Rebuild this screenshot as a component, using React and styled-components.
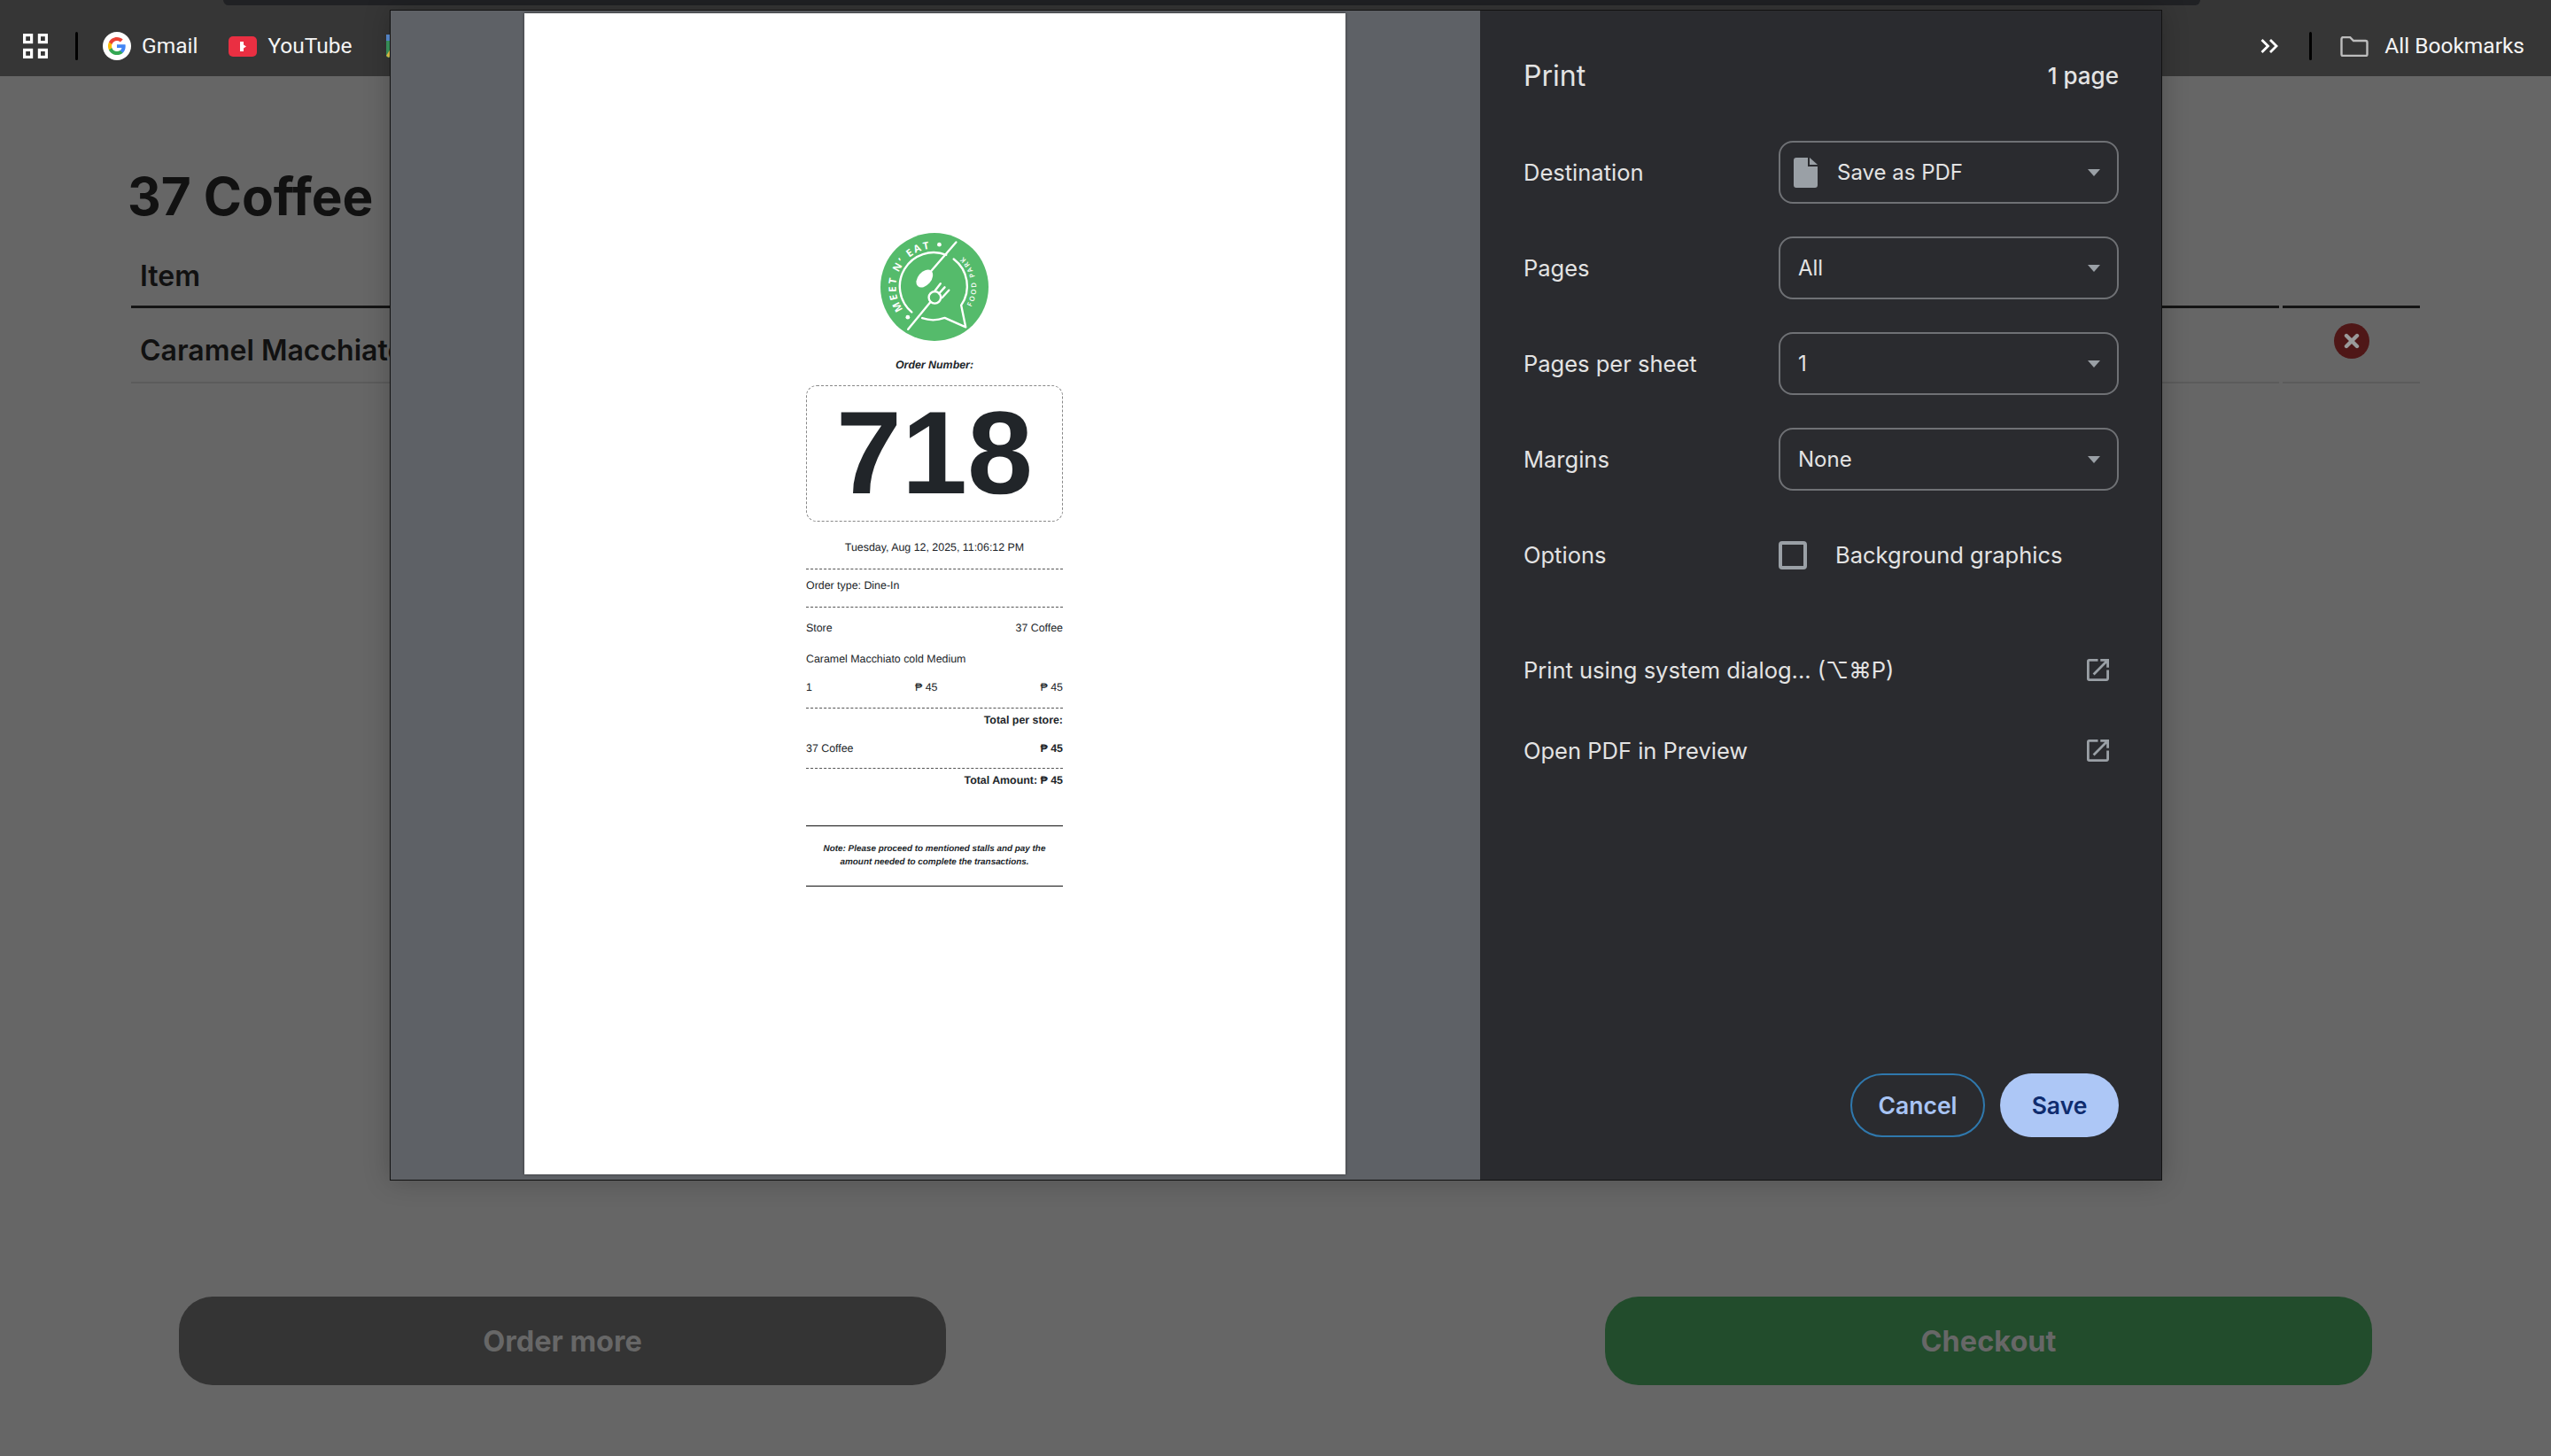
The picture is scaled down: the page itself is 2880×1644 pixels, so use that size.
import React from "react";
import styled, { createGlobalStyle } from "styled-components";

const GlobalStyle = createGlobalStyle`
  html, body {
    margin: 0;
    padding: 0;
    background: #666666;
  }
  body {
    width: 2880px;
    height: 1644px;
    overflow: hidden;
    font-family: Inter, "Liberation Sans", sans-serif;
  }
`;

const Screen = styled.div`
  position: relative;
  width: 2880px;
  height: 1644px;
  display: flex;
  flex-direction: column;
  background: #666666;
  overflow: hidden;
`;

/* browser bookmarks bar */
const BookmarkBar = styled.header`
  position: relative;
  flex: none;
  box-sizing: border-box;
  height: 86px;
  padding: 36px 30px 0 26px;
  display: flex;
  align-items: flex-start;
  background: #363636;
  color: #f4f4f4;
  font-family: Roboto, sans-serif;
  font-size: 24.5px;
`;

const OmniboxEdge = styled.div`
  position: absolute;
  left: 252px;
  right: 396px;
  top: 0;
  height: 6px;
  background: #202124;
  border-radius: 0 0 22px 22px;
`;

const BarGroup = styled.div`
  display: flex;
  align-items: center;
  height: 32px;
  margin-left: ${props => props.$push ? "auto" : "0"};
`;

const BarSeparator = styled.div`
  width: 3px;
  height: 32px;
  margin-left: ${props => props.$ml}px;
  background: #000;
  border-radius: 2px;
`;

const BookmarkLabel = styled.span`
  margin-left: ${props => props.$ml}px;
  line-height: 32px;
`;

const IconSlot = styled.span`
  display: block;
  flex: none;
  line-height: 0;
  margin-left: ${props => props.$ml || 0}px;
`;

/* page behind the dialog */
const Main = styled.main`
  flex: 1;
  display: flex;
  flex-direction: column;
  padding: 101px 148px 80px 148px;
  color: #111;
`;

const Heading = styled.h1`
  margin: 0 0 0 -4px;
  font-size: 58.5px;
  font-weight: 700;
  line-height: 70px;
`;

const CartRow = styled.div`
  display: grid;
  grid-template-columns: 1fr 155px;
  column-gap: 4px;
  margin-top: ${props => props.$mt || 0}px;
  height: ${props => props.$h}px;
`;

const HeadCell = styled.div`
  display: flex;
  align-items: center;
  box-sizing: border-box;
  padding: 2px 0 0 10px;
  border-bottom: 3px solid #141414;
  font-size: 32px;
  font-weight: 600;
`;

const BodyCell = styled.div`
  display: flex;
  align-items: ${props => props.$center ? "flex-start" : "center"};
  justify-content: ${props => props.$center ? "center" : "flex-start"};
  box-sizing: border-box;
  padding: ${props => props.$center ? "17px 0 0" : "12px 0 0 10px"};
  border-bottom: 2px solid #5b5b5b;
  font-size: 32px;
  font-weight: 600;
`;

const RemoveButton = styled.span`
  width: 40px;
  height: 40px;
  border-radius: 50%;
  background: #4f1717;
  display: flex;
  align-items: center;
  justify-content: center;
`;

const Actions = styled.div`
  margin-top: auto;
  display: flex;
  justify-content: space-between;
  padding: 0 54px;
`;

const ActionButton = styled.div`
  width: 866px;
  height: 100px;
  display: flex;
  align-items: center;
  justify-content: center;
  border-radius: 38px;
  background: ${props => props.$bg};
  color: #676767;
  font-size: 32.5px;
  font-weight: 700;
`;

/* print dialog */
const Dialog = styled.section`
  position: absolute;
  left: 440px;
  top: 11px;
  width: 2001px;
  height: 1322px;
  box-sizing: border-box;
  display: flex;
  border: 1px solid #121212;
  box-shadow: 0 0 28px rgba(0, 0, 0, 0.22);
`;

const Preview = styled.div`
  flex: none;
  width: 1230px;
  box-sizing: border-box;
  padding: 3px 0 0 151px;
  background: #5e6166;
`;

const Sheet = styled.div`
  width: 927px;
  height: 1311px;
  box-sizing: border-box;
  padding: 248px 0 0 318px;
  background: #fff;
  box-shadow: 0 0 3px rgba(0, 0, 0, 0.5);
  color: #212529;
  font-family: "Liberation Sans", Arial, sans-serif;
  text-rendering: geometricPrecision;
`;

const Receipt = styled.div`
  width: 290px;
  display: flex;
  flex-direction: column;
`;

const LogoWrap = styled.div`
  align-self: center;
  height: 122px;
  line-height: 0;
`;

const OrderLabel = styled.div`
  margin-top: 17px;
  text-align: center;
  font-size: 12.4px;
  font-weight: 700;
  font-style: italic;
  line-height: 20px;
`;

const NumberBox = styled.div`
  margin-top: 13px;
  height: 154px;
  box-sizing: border-box;
  display: flex;
  align-items: center;
  justify-content: center;
  border: 1px dashed #888;
  border-radius: 12px;
  font-size: 133px;
  font-weight: 700;
  line-height: 1;
`;

const Rule = styled.div`
  margin-top: ${props => props.$mt}px;
  border-top: 1px ${props => props.$solid ? "solid #111" : "dashed #555"};
`;

const Line = styled.div`
  margin-top: ${props => props.$mt}px;
  display: flex;
  justify-content: ${props => props.$align || "flex-start"};
  font-size: 12.4px;
  line-height: 20px;
  font-weight: ${props => props.$bold ? 700 : 400};
`;

const Between = styled(Line)`
  justify-content: space-between;
`;

const Note = styled.p`
  margin: 19px 0 0;
  text-align: center;
  font-size: 9.9px;
  font-weight: 700;
  font-style: italic;
  line-height: 14.5px;
`;

const Panel = styled.aside`
  flex: 1;
  box-sizing: border-box;
  padding: 0 48px 48px 49px;
  display: flex;
  flex-direction: column;
  background: #2a2b2f;
  color: #e3e3e3;
  font-size: 25.5px;
`;

const PanelHead = styled.div`
  height: 147px;
  display: flex;
  align-items: flex-start;
  justify-content: space-between;
`;

const PanelTitle = styled.h2`
  margin: 54px 0 0;
  font-size: 32px;
  font-weight: 400;
  line-height: 40px;
`;

const SheetCount = styled.div`
  margin-top: 54px;
  line-height: 40px;
  font-size: 26px;
  font-weight: 500;
`;

const SettingRow = styled.div`
  display: grid;
  grid-template-columns: 288px 1fr;
  align-items: center;
  height: 71px;
  margin-bottom: 37px;
`;

const SelectBox = styled.div`
  height: 71px;
  box-sizing: border-box;
  padding: 0 20px;
  display: flex;
  align-items: center;
  border: 2px solid #6f7175;
  border-radius: 16px;
  font-size: 24px;
`;

const SelectText = styled.span`
  flex: 1;
  margin-left: ${props => props.$ml || 0}px;
`;

const Caret = styled.span`
  width: 0;
  height: 0;
  margin-right: -1px;
  border-left: 7px solid transparent;
  border-right: 7px solid transparent;
  border-top: 8px solid #9aa0a6;
`;

const CheckRow = styled.div`
  display: flex;
  align-items: center;
  gap: 32px;
`;

const CheckBox = styled.span`
  width: 32px;
  height: 32px;
  box-sizing: border-box;
  border: 4px solid #9aa0a6;
  border-radius: 4px;
`;

const LinkRow = styled.div`
  height: 91px;
  display: flex;
  align-items: center;
  justify-content: space-between;
  padding-right: 11px;
  margin-top: ${props => props.$mt || 0}px;
`;

const Footer = styled.div`
  margin-top: auto;
  display: flex;
  justify-content: flex-end;
  gap: 17px;
`;

const PillButton = styled.div`
  height: 72px;
  width: ${props => props.$w}px;
  box-sizing: border-box;
  display: flex;
  align-items: center;
  justify-content: center;
  border-radius: 36px;
  font-size: 26.5px;
  font-weight: 600;
  border: ${props => props.$primary ? "none" : "2px solid #2f78ad"};
  background: ${props => props.$primary ? "#adc7f6" : "transparent"};
  color: ${props => props.$primary ? "#0f2c6e" : "#a8c4f4"};
`;

const AppsIcon = () => (
  <svg width="28" height="28" viewBox="0 0 28 28" fill="none" stroke="#fff" strokeWidth="3.2">
    <rect x="1.6" y="1.6" width="8" height="8" />
    <rect x="18.4" y="1.6" width="8" height="8" />
    <rect x="1.6" y="18.4" width="8" height="8" />
    <rect x="18.4" y="18.4" width="8" height="8" />
  </svg>
);

const GoogleIcon = () => (
  <svg width="32" height="32" viewBox="0 0 32 32">
    <circle cx="16" cy="16" r="16" fill="#fff" />
    <g transform="translate(5 5) scale(0.4583)">
      <path fill="#4285F4" d="M45.12 24.5c0-1.56-.14-3.06-.4-4.5H24v8.51h11.84c-.51 2.75-2.06 5.08-4.39 6.64v5.52h7.11c4.16-3.83 6.56-9.47 6.56-16.17z" />
      <path fill="#34A853" d="M24 46c5.94 0 10.92-1.97 14.56-5.33l-7.11-5.52c-1.97 1.32-4.49 2.1-7.45 2.1-5.73 0-10.58-3.87-12.31-9.07H4.34v5.7C7.96 41.07 15.4 46 24 46z" />
      <path fill="#FBBC05" d="M11.69 28.18c-.44-1.32-.69-2.73-.69-4.18s.25-2.86.69-4.18v-5.7H4.34C2.85 17.09 2 20.45 2 24s.85 6.91 2.34 9.88l7.35-5.7z" />
      <path fill="#EA4335" d="M24 10.75c3.23 0 6.13 1.11 8.41 3.29l6.31-6.31C34.91 4.18 29.93 2 24 2 15.4 2 7.96 6.93 4.34 14.12l7.35 5.7c1.73-5.2 6.58-9.07 12.31-9.07z" />
    </g>
  </svg>
);

const YouTubeIcon = () => (
  <svg width="32" height="23" viewBox="0 0 32 23">
    <rect width="32" height="23" rx="5" fill="#ea2f42" />
    <path fill="#fff" d="M13 6h4v3.5l3 2-3 2V17h-4z" />
  </svg>
);

const MapsIcon = () => (
  <svg width="26" height="26" viewBox="0 0 26 26">
    <rect width="26" height="26" rx="3" fill="#3c9a5f" />
    <path d="M0 24 L10 8 L13 10 L3 26 Z" fill="#e8c64a" />
    <rect x="0" y="0" width="7" height="7" fill="#5b8fd6" />
  </svg>
);

const ChevronsIcon = () => (
  <svg width="20" height="16" viewBox="0 0 20 16" fill="none" stroke="#fff" strokeWidth="2.8">
    <polyline points="1.5,1 8.5,8 1.5,15" />
    <polyline points="11,1 18,8 11,15" />
  </svg>
);

const FolderIcon = () => (
  <svg width="32" height="23" viewBox="0 0 32 23" fill="none" stroke="#bdbdbd" strokeWidth="2.4">
    <path d="M1.5 3a2 2 0 0 1 2-2H11l4 4h13.5a2 2 0 0 1 2 2v13.5a1.5 1.5 0 0 1-1.5 1.5H3a1.5 1.5 0 0 1-1.5-1.5z" />
  </svg>
);

const FileIcon = () => (
  <svg width="27" height="34" viewBox="0 0 27 34">
    <path fill="#9aa0a6" d="M3 0h13v10h11v21a3 3 0 0 1-3 3H3a3 3 0 0 1-3-3V3a3 3 0 0 1 3-3zM18 0l9 8h-9z" />
  </svg>
);

const ExternalIcon = () => (
  <svg width="25" height="25" viewBox="3 3 18 18">
    <path fill="#9aa0a6" d="M19 19H5V5h7V3H5a2 2 0 0 0-2 2v14a2 2 0 0 0 2 2h14c1.1 0 2-.9 2-2v-7h-2v7zM14 3v2h3.59l-9.83 9.83 1.41 1.41L19 6.41V10h2V3h-7z" />
  </svg>
);

const CrossIcon = () => (
  <svg width="18" height="18" viewBox="0 0 18 18" stroke="#9a9a9a" strokeWidth="4.4" strokeLinecap="round">
    <line x1="3" y1="3" x2="15" y2="15" />
    <line x1="15" y1="3" x2="3" y2="15" />
  </svg>
);

const ParkLogo = () => (
  <svg width="122" height="122" viewBox="36 31 360 360">
    <defs>
      <path id="logo-top" d="M112 286 A128 128 0 0 1 240 85" />
      <path id="logo-side" d="M338 278 A139 139 0 0 0 280 88" />
    </defs>
    <circle cx="216" cy="211" r="180" fill="#55bb6b" />
    <g fill="none" stroke="#fff" strokeWidth="7" strokeLinecap="round" strokeLinejoin="round">
      <path d="M140 295 A113 113 0 0 1 255 104" />
      <path d="M280 118 A113 113 0 0 1 305 272 L320 345 L250 314 A113 113 0 0 1 175 315" />
      <line x1="288" y1="62" x2="205" y2="158" />
      <line x1="128" y1="352" x2="202" y2="262" />
      <circle cx="217" cy="246" r="20" />
      <path d="M216 226 L236 200 M231 233 L250 212 M241 247 L264 222" />
    </g>
    <ellipse cx="183" cy="183" rx="22" ry="34" fill="#fff" transform="rotate(40 183 183)" />
    <circle cx="232" cy="70" r="7" fill="#fff" />
    <circle cx="127" cy="312" r="7" fill="#fff" />
    <text fill="#fff" fontFamily="'Open Sans', sans-serif" fontWeight="700" fontSize="34" letterSpacing="6">
      <textPath href="#logo-top">MEET N’ EAT</textPath>
    </text>
    <text fill="#fff" fontFamily="'Open Sans', sans-serif" fontWeight="600" fontSize="23" letterSpacing="6.5">
      <textPath href="#logo-side">FOOD PARK</textPath>
    </text>
  </svg>
);

const SELECTS = [
  { label: "Pages", value: "All" },
  { label: "Pages per sheet", value: "1" },
  { label: "Margins", value: "None" },
];

export default function App() {
  return (
    <Screen>
      <GlobalStyle />
      <BookmarkBar>
        <OmniboxEdge />
        <BarGroup>
          <IconSlot><AppsIcon /></IconSlot>
          <BarSeparator $ml={31} />
          <IconSlot $ml={28}><GoogleIcon /></IconSlot>
          <BookmarkLabel $ml={12}>Gmail</BookmarkLabel>
          <IconSlot $ml={35}><YouTubeIcon /></IconSlot>
          <BookmarkLabel $ml={12}>YouTube</BookmarkLabel>
          <IconSlot $ml={38}><MapsIcon /></IconSlot>
        </BarGroup>
        <BarGroup $push>
          <IconSlot><ChevronsIcon /></IconSlot>
          <BarSeparator $ml={35} />
          <IconSlot $ml={32}><FolderIcon /></IconSlot>
          <BookmarkLabel $ml={18}>All Bookmarks</BookmarkLabel>
        </BarGroup>
      </BookmarkBar>

      <Main>
        <Heading>37 Coffee</Heading>
        <CartRow $mt={19} $h={72}>
          <HeadCell>Item</HeadCell>
          <HeadCell />
        </CartRow>
        <CartRow $h={85}>
          <BodyCell>Caramel Macchiato cold Medium</BodyCell>
          <BodyCell $center>
            <RemoveButton><CrossIcon /></RemoveButton>
          </BodyCell>
        </CartRow>
        <Actions>
          <ActionButton $bg="#343434">Order more</ActionButton>
          <ActionButton $bg="#224c2c">Checkout</ActionButton>
        </Actions>
      </Main>

      <Dialog>
        <Preview>
          <Sheet>
            <Receipt>
              <LogoWrap><ParkLogo /></LogoWrap>
              <OrderLabel>Order Number:</OrderLabel>
              <NumberBox>718</NumberBox>
              <Line $mt={19} $align="center">Tuesday, Aug 12, 2025, 11:06:12 PM</Line>
              <Rule $mt={14} />
              <Line $mt={8}>Order type: Dine-In</Line>
              <Rule $mt={14} />
              <Between $mt={13}><span>Store</span><span>37 Coffee</span></Between>
              <Line $mt={15}>Caramel Macchiato cold Medium</Line>
              <Between $mt={12}><span>1</span><span>₱ 45</span><span>₱ 45</span></Between>
              <Rule $mt={13} />
              <Line $mt={3} $align="flex-end" $bold>Total per store:</Line>
              <Between $mt={12}><span>37 Coffee</span><b>₱ 45</b></Between>
              <Rule $mt={12} />
              <Line $mt={3} $align="flex-end" $bold>Total Amount: ₱ 45</Line>
              <Rule $mt={41} $solid />
              <Note>
                Note: Please proceed to mentioned stalls and pay the
                <br />
                amount needed to complete the transactions.
              </Note>
              <Rule $mt={19} $solid />
            </Receipt>
          </Sheet>
        </Preview>

        <Panel>
          <PanelHead>
            <PanelTitle>Print</PanelTitle>
            <SheetCount>1 page</SheetCount>
          </PanelHead>
          <SettingRow>
            <span>Destination</span>
            <SelectBox>
              <IconSlot $ml={-5}><FileIcon /></IconSlot>
              <SelectText $ml={22}>Save as PDF</SelectText>
              <Caret />
            </SelectBox>
          </SettingRow>
          {SELECTS.map(item => (
            <SettingRow key={item.label}>
              <span>{item.label}</span>
              <SelectBox>
                <SelectText>{item.value}</SelectText>
                <Caret />
              </SelectBox>
            </SettingRow>
          ))}
          <SettingRow>
            <span>Options</span>
            <CheckRow>
              <CheckBox />
              <span>Background graphics</span>
            </CheckRow>
          </SettingRow>
          <LinkRow $mt={12}>
            <span>Print using system dialog... (⌥⌘P)</span>
            <ExternalIcon />
          </LinkRow>
          <LinkRow>
            <span>Open PDF in Preview</span>
            <ExternalIcon />
          </LinkRow>
          <Footer>
            <PillButton $w={152}>Cancel</PillButton>
            <PillButton $w={134} $primary>Save</PillButton>
          </Footer>
        </Panel>
      </Dialog>
    </Screen>
  );
}
